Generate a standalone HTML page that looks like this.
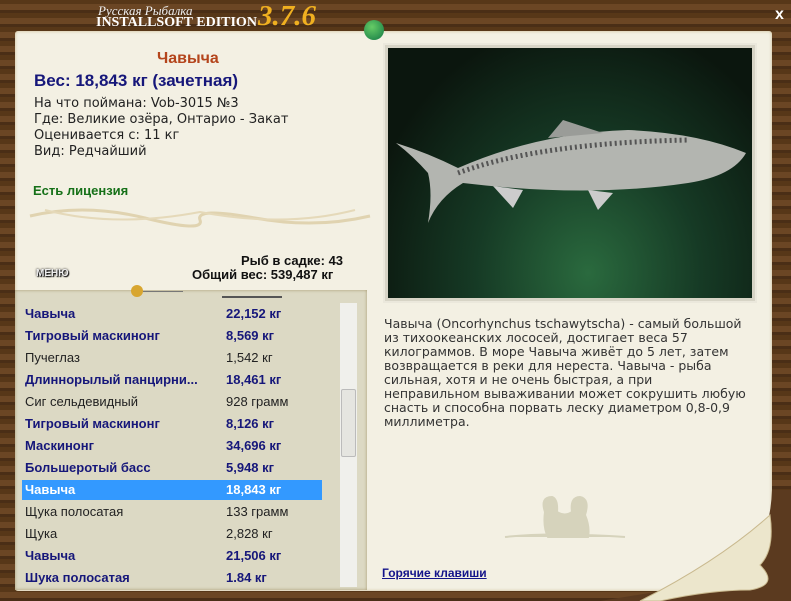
<!DOCTYPE html>
<html><head><meta charset="utf-8"><style>
*{margin:0;padding:0;box-sizing:border-box}
body{width:791px;height:601px;overflow:hidden;background:#5b3a1f;font-family:"Liberation Sans","DejaVu Sans",sans-serif;position:relative}
.wood{position:absolute;inset:0;background:repeating-linear-gradient(0deg,#4a2e16 0 3px,#6b4624 3px 9px,#573718 9px 14px)}
.paper{position:absolute;left:15px;top:31px;width:757px;height:560px;background:#f3f0e3;border-radius:3px;box-shadow:0 0 3px #c9b98e inset}
.a{position:absolute;white-space:nowrap}
.list{position:absolute;left:15px;top:290px;width:352px;height:300px;background:#dcd9c4;box-shadow:0 0 3px #a89a70 inset}
.row{position:absolute;left:25px;width:300px;font-size:13px;height:20px;line-height:20px;white-space:nowrap}
.b{font-weight:bold;color:#16177a}
.n{color:#222}
.v{position:absolute;left:201px;top:0}
.hl{position:absolute;left:22px;top:480px;width:300px;height:20px;background:#3399ff}
.photo{position:absolute;left:383px;top:43px;width:374px;height:260px;background:#d7d4c6;border:2px solid #ebe8dc}
.pic{position:absolute;left:3px;top:3px;width:364px;height:250px;background:radial-gradient(ellipse at 55% 90%,#2a6a3e 0,#163a25 40%,#0b160e 80%)}
.dj{font-family:"DejaVu Sans",sans-serif}
</style></head><body>
<div class="wood"></div>
<div class="paper"></div>
<div class="a" style="left:98px;top:3px;font-family:'Liberation Serif',serif;font-style:italic;color:#eee;font-size:13px">Русская Рыбалка</div>
<div class="a" style="left:96px;top:15px;font-family:'Liberation Serif',serif;color:#fff;font-size:14px;font-weight:bold">INSTALLSOFT EDITION</div>
<div class="a" style="left:258px;top:0px;font-family:'Liberation Serif',serif;font-style:italic;font-weight:bold;color:#f0b020;font-size:29px">3.7.6</div>
<div style="position:absolute;left:364px;top:20px;width:20px;height:20px;border-radius:50%;background:radial-gradient(circle at 40% 35%,#6c6,#174)"></div>
<div class="a" style="left:775px;top:6px;color:#fff;font-weight:bold;font-size:16px">x</div>
<div class="a" style="left:157px;top:50px;color:#b4451c;font-weight:bold;font-size:16px">Чавыча</div>
<div class="a" style="left:34px;top:71px;color:#16177a;font-weight:bold;font-size:17px">Вес: 18,843 кг (зачетная)</div>
<div class="a dj" style="left:34px;top:96px;color:#222;font-size:13px;line-height:16px">На что поймана: Vob-3015 №3<br>Где: Великие озёра, Онтарио - Закат<br>Оценивается с: 11 кг<br>Вид: Редчайший</div>
<div class="a" style="left:33px;top:183px;color:#157018;font-weight:bold;font-size:13px">Есть лицензия</div>
<svg class="a" style="left:25px;top:198px" width="350" height="30"><path d="M5 18 Q60 5 120 20 T175 22 T230 20 T345 18" stroke="#e0d3b0" stroke-width="3" fill="none"/><path d="M20 12 Q90 30 175 14 Q260 30 330 12" stroke="#e5d9b9" stroke-width="2" fill="none"/></svg>
<div class="a" style="left:241px;top:253px;font-weight:bold;font-size:13px;color:#111">Рыб в садке: 43</div>
<div class="a" style="left:192px;top:267px;font-weight:bold;font-size:13px;color:#111">Общий вес: 539,487 кг</div>
<div class="a" style="left:36px;top:268px;font-weight:bold;font-size:10px;color:#eee;text-shadow:0 0 2px #000,1px 1px 1px #000">МЕНЮ</div>
<div class="list"></div>
<div style="position:absolute;left:131px;top:285px;width:12px;height:12px;border-radius:50%;background:#d8a630"></div>
<div style="position:absolute;left:143px;top:291px;width:40px;height:1px;background:#777"></div>
<div style="position:absolute;left:222px;top:296px;width:60px;height:2px;background:#555"></div>
<div class="hl"></div>
<div style="position:absolute;left:340px;top:303px;width:17px;height:284px;background:#f0f0ec"></div>
<div style="position:absolute;left:341px;top:389px;width:15px;height:68px;background:#e5e5e0;border:1px solid #bbb;border-radius:2px"></div>
<div class="row b" style="top:304px">Чавыча<span class="v">22,152 кг</span></div>
<div class="row b" style="top:326px">Тигровый маскинонг<span class="v">8,569 кг</span></div>
<div class="row n" style="top:348px">Пучеглаз<span class="v">1,542 кг</span></div>
<div class="row b" style="top:370px">Длиннорылый панцирни...<span class="v">18,461 кг</span></div>
<div class="row n" style="top:392px">Сиг сельдевидный<span class="v">928 грамм</span></div>
<div class="row b" style="top:414px">Тигровый маскинонг<span class="v">8,126 кг</span></div>
<div class="row b" style="top:436px">Маскинонг<span class="v">34,696 кг</span></div>
<div class="row b" style="top:458px">Большеротый басс<span class="v">5,948 кг</span></div>
<div class="row" style="top:480px;font-weight:bold;color:#fff">Чавыча<span class="v">18,843 кг</span></div>
<div class="row n" style="top:502px">Щука полосатая<span class="v">133 грамм</span></div>
<div class="row n" style="top:524px">Щука<span class="v">2,828 кг</span></div>
<div class="row b" style="top:546px">Чавыча<span class="v">21,506 кг</span></div>
<div class="row b" style="top:568px">Шука полосатая<span class="v">1.84 кг</span></div>
<div class="photo"><div class="pic"><svg width="364" height="250"><path d="M8 95 Q40 105 70 120 Q150 85 240 82 Q310 85 358 105 Q345 128 300 135 Q200 150 75 135 Q50 150 40 175 Q45 145 40 125 Q25 108 8 95Z" fill="#b3b5b0"/><path d="M70 125 Q150 95 300 92" stroke="#555" stroke-width="5" stroke-dasharray="2 3" fill="none"/><path d="M160 90 L175 72 L215 85Z" fill="#9a9c98"/><path d="M105 138 L125 160 L135 142Z M200 142 L210 162 L225 145Z" fill="#ccc"/></svg></div></div>
<div class="a dj" style="left:384px;top:317px;color:#333;font-size:12.5px;line-height:14px;white-space:normal;width:366px">Чавыча (Oncorhynchus tschawytscha) - самый большой из тихоокеанских лососей, достигает веса 57 килограммов. В море Чавыча живёт до 5 лет, затем возвращается в реки для нереста. Чавыча - рыба сильная, хотя и не очень быстрая, а при неправильном вываживании может сокрушить любую снасть и способна порвать леску диаметром 0,8-0,9 миллиметра.</div>
<svg class="a" style="left:500px;top:487px" width="130" height="60"><path d="M45 25 Q40 10 52 10 Q58 12 57 25 Q65 30 72 25 Q70 10 80 10 Q90 12 85 28 Q90 40 88 50 L48 50 Q43 40 45 25Z M5 50 Q50 45 125 50" fill="#d6d3bc" stroke="#d6d3bc" stroke-width="2"/></svg>
<div class="a" style="left:382px;top:566px;color:#14148a;font-weight:bold;font-size:12px;text-decoration:underline">Горячие клавиши</div>
<svg class="a" style="left:600px;top:490px" width="191" height="111"><path d="M191 111 L191 0 L172 0 Q170 60 130 90 L0 111Z" fill="#5b3a1f"/><path d="M40 111 Q120 70 170 25 Q175 60 160 75 Q180 95 150 100 Q110 100 60 111Z" fill="#ece6cc" stroke="#c9b98e"/></svg>
</body></html>
